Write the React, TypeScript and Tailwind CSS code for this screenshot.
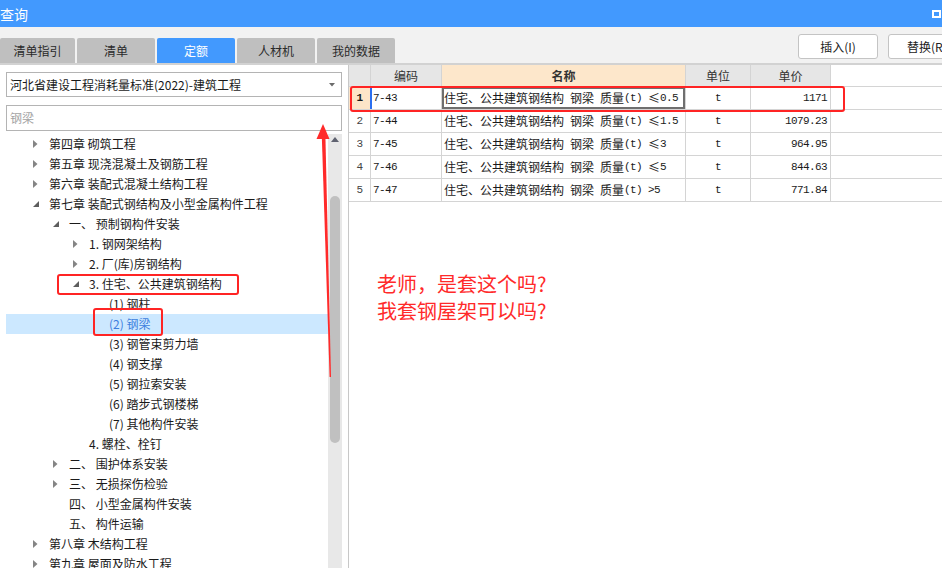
import React from 'react'

type Node = { level: number; label: string; state: 'open' | 'closed' | 'leaf'; selected?: boolean }

const tree: Node[] = [
  { level: 0, label: '第四章 砌筑工程', state: 'closed' },
  { level: 0, label: '第五章 现浇混凝土及钢筋工程', state: 'closed' },
  { level: 0, label: '第六章 装配式混凝土结构工程', state: 'closed' },
  { level: 0, label: '第七章 装配式钢结构及小型金属构件工程', state: 'open' },
  { level: 1, label: '一、 预制钢构件安装', state: 'open' },
  { level: 2, label: '1. 钢网架结构', state: 'closed' },
  { level: 2, label: '2. 厂(库)房钢结构', state: 'closed' },
  { level: 2, label: '3. 住宅、公共建筑钢结构', state: 'open' },
  { level: 3, label: '(1) 钢柱', state: 'leaf' },
  { level: 3, label: '(2) 钢梁', state: 'leaf', selected: true },
  { level: 3, label: '(3) 钢管束剪力墙', state: 'leaf' },
  { level: 3, label: '(4) 钢支撑', state: 'leaf' },
  { level: 3, label: '(5) 钢拉索安装', state: 'leaf' },
  { level: 3, label: '(6) 踏步式钢楼梯', state: 'leaf' },
  { level: 3, label: '(7) 其他构件安装', state: 'leaf' },
  { level: 2, label: '4. 螺栓、栓钉', state: 'leaf' },
  { level: 1, label: '二、 围护体系安装', state: 'closed' },
  { level: 1, label: '三、 无损探伤检验', state: 'closed' },
  { level: 1, label: '四、 小型金属构件安装', state: 'leaf' },
  { level: 1, label: '五、 构件运输', state: 'leaf' },
  { level: 0, label: '第八章 木结构工程', state: 'closed' },
  { level: 0, label: '第九章 屋面及防水工程', state: 'closed' },
]

const rows = [
  { code: '7-43', name: '住宅、公共建筑钢结构 钢梁 质量(t) ≤0.5', unit: 't', price: '1171' },
  { code: '7-44', name: '住宅、公共建筑钢结构 钢梁 质量(t) ≤1.5', unit: 't', price: '1079.23' },
  { code: '7-45', name: '住宅、公共建筑钢结构 钢梁 质量(t) ≤3', unit: 't', price: '964.95' },
  { code: '7-46', name: '住宅、公共建筑钢结构 钢梁 质量(t) ≤5', unit: 't', price: '844.63' },
  { code: '7-47', name: '住宅、公共建筑钢结构 钢梁 质量(t) >5', unit: 't', price: '771.84' },
]

const tabs = ['清单指引', '清单', '定额', '人材机', '我的数据']

// ascii runs in a narrow mono face, like the grid's half-width glyphs
function Mixed({ text }: { text: string }) {
  const parts = text.split(/([\x20-\x7e]+)/).filter(Boolean)
  return (
    <>
      {parts.map((p, i) =>
        /^[\x20-\x7e]+$/.test(p) ? (
          <span key={i} className="[font-family:'Liberation_Mono',monospace] text-[11px] tracking-[-0.6px] whitespace-pre">
            {p}
          </span>
        ) : (
          <span key={i}>{p}</span>
        )
      )}
    </>
  )
}

function Toggle({ state }: { state: Node['state'] }) {
  if (state === 'closed')
    return (
      <svg width="5" height="8" viewBox="0 0 5 8" className="ml-[6px]">
        <polygon points="0,0 4.5,4 0,8" fill="#858585" />
      </svg>
    )
  if (state === 'open')
    return (
      <svg width="6" height="6" viewBox="0 0 6 6" className="ml-[6px]">
        <polygon points="6,0 6,6 0,6" fill="#5e5e5e" />
      </svg>
    )
  return null
}

export default function App() {
  return (
    <div className="relative w-[942px] h-[568px] overflow-hidden bg-white [font-family:'Noto_Sans_CJK_SC',sans-serif] text-[12px] text-[#1a1a1a]">
      {/* title bar */}
      <div className="h-[27px] bg-[#4299fe] flex items-center justify-between">
        <span className="text-white text-[14px] leading-none">查询</span>
        <div className="mr-[1px] w-[9px] h-[8px] border-2 border-white" />
      </div>

      {/* tabs + actions */}
      <div className="h-[36px] bg-[#f2f2f2] flex">
        <div className="flex items-end gap-[2px]">
          {tabs.map((t, i) => (
            <div
              key={t}
              className={
                'h-[25px] flex items-center justify-center rounded-t-[2px] ' +
                (i === 0 ? 'w-[75px] ' : 'w-[78px] ') +
                (i === 2 ? 'bg-[#4299fe] text-white' : 'bg-[#bfbfbf] text-[#2a2a2a]')
              }
            >
              {t}
            </div>
          ))}
        </div>
        <div className="ml-auto flex gap-[10px] mt-[7px] -mr-[26px]">
          <button className="w-[80px] h-[25px] bg-white border border-[#c4c4c4] rounded-[3px] text-[#222]">插入(I)</button>
          <button className="w-[80px] h-[25px] bg-white border border-[#c4c4c4] rounded-[3px] text-[#222] text-left pl-[18px]">替换(R)</button>
        </div>
      </div>
      <div className="h-[2px] bg-[#d2d2d2]" />

      <div className="flex h-[503px]">
        {/* left panel */}
        <div className="w-[348px] flex flex-col">
          <div className="mt-[7px] mx-[6px] h-[25px] border border-[#b4b4b4] flex items-center pl-[3px] pr-[6px]">
            <span className="flex-1">河北省建设工程消耗量标准(2022)-建筑工程</span>
            <svg width="6" height="4" viewBox="0 0 6 4">
              <polygon points="0,0 6,0 3,3.5" fill="#6b6b6b" />
            </svg>
          </div>
          <div className="mt-[8px] mx-[6px] h-[26px] border border-[#b4b4b4] flex items-center pl-[3px] text-[#a3a3a3]">
            钢梁
          </div>
          <div className="mt-[3px] flex flex-1 min-h-0">
            <div className="ml-[6px] w-[322px] overflow-hidden">
              {tree.map((n, i) => (
                <div
                  key={i}
                  className={'h-[20px] flex items-center ' + (n.selected ? 'bg-[#cce8ff] text-[#3d7fde]' : '')}
                  style={{ paddingLeft: 21 + n.level * 20 }}
                >
                  <div className="w-[22px] flex items-center">
                    <Toggle state={n.state} />
                  </div>
                  <span className="whitespace-pre leading-none">{n.label}</span>
                </div>
              ))}
            </div>
            <div className="w-[14px] bg-[#e8e8e8] flex flex-col items-center">
              <svg width="8" height="5" viewBox="0 0 8 5" className="mt-[3px]">
                <polygon points="0,5 4,0 8,5" fill="#5f6270" />
              </svg>
              <div className="mt-[54px] w-[10px] h-[247px] rounded-[5px] bg-[#c0c0c0]" />
            </div>
          </div>
        </div>

        {/* right panel */}
        <div className="flex-1 border-l border-[#c8c8c8] bg-white">
          <div className="flex h-[22px] border-b border-[#d4d4d4] text-[#333]">
            <div className="w-[22px] border-r border-[#d4d4d4] bg-[#e6e6e6]" />
            <div className="w-[71px] border-r border-[#d4d4d4] bg-[#e6e6e6] flex items-center justify-center">编码</div>
            <div className="w-[244px] border-r border-[#d4d4d4] bg-[#fde7cb] flex items-center justify-center font-bold">名称</div>
            <div className="w-[65px] border-r border-[#d4d4d4] bg-[#e6e6e6] flex items-center justify-center">单位</div>
            <div className="w-[80px] border-r border-[#d4d4d4] bg-[#e6e6e6] flex items-center justify-center">单价</div>
          </div>
          {rows.map((r, i) => {
            const first = i === 0
            return (
              <div key={r.code} className="flex h-[23px] border-b border-[#d4d4d4] text-[#1a1a1a]">
                <div
                  className={
                    'w-[22px] border-r flex items-center justify-center ' +
                    (first ? 'bg-[#fde5c8] border-[#2b6ff0] font-bold' : 'border-[#d4d4d4] text-[#444]')
                  }
                >
                  <Mixed text={String(i + 1)} />
                </div>
                <div className={'w-[71px] border-r border-[#d4d4d4] flex items-center pl-[2px] ' + (first ? 'shadow-[inset_1px_0_0_#2b6ff0]' : '')}>
                  <Mixed text={r.code} />
                </div>
                <div className={'w-[244px] border-r border-[#d4d4d4] flex items-center pl-[2px] whitespace-nowrap ' + (first ? 'shadow-[inset_0_0_0_2px_#6f6f6f]' : '')}>
                  <Mixed text={r.name} />
                </div>
                <div className="w-[65px] border-r border-[#d4d4d4] flex items-center justify-center">
                  <Mixed text={r.unit} />
                </div>
                <div className="w-[80px] border-r border-[#d4d4d4] flex items-center justify-end pr-[3px]">
                  <Mixed text={r.price} />
                </div>
              </div>
            )
          })}
        </div>
      </div>

      {/* annotations drawn over the screenshot */}
      <div className="absolute left-[350px] top-[86px] w-[495px] h-[26px] border-2 border-[#ff2424] rounded-[3px]" />
      <div className="absolute left-[57px] top-[274px] w-[182px] h-[21px] border-2 border-[#ff2424] rounded-[3px]" />
      <div className="absolute left-[93px] top-[308px] w-[70px] h-[28px] border-2 border-[#ff2424] rounded-[3px]" />
      <svg className="absolute left-0 top-0 pointer-events-none" width="942" height="568" viewBox="0 0 942 568">
        <polygon points="321.8,136 325.4,136 331,377 329.6,377" fill="#ff2a2a" />
        <polygon points="323,124 316.5,139 329.5,139" fill="#ff2a2a" />
      </svg>
      <div className="absolute left-[377px] top-[270px] text-[20px] leading-[27px] text-[#ff2a2a]">
        <div>老师，是套这个吗?</div>
        <div>我套钢屋架可以吗?</div>
      </div>
    </div>
  )
}
